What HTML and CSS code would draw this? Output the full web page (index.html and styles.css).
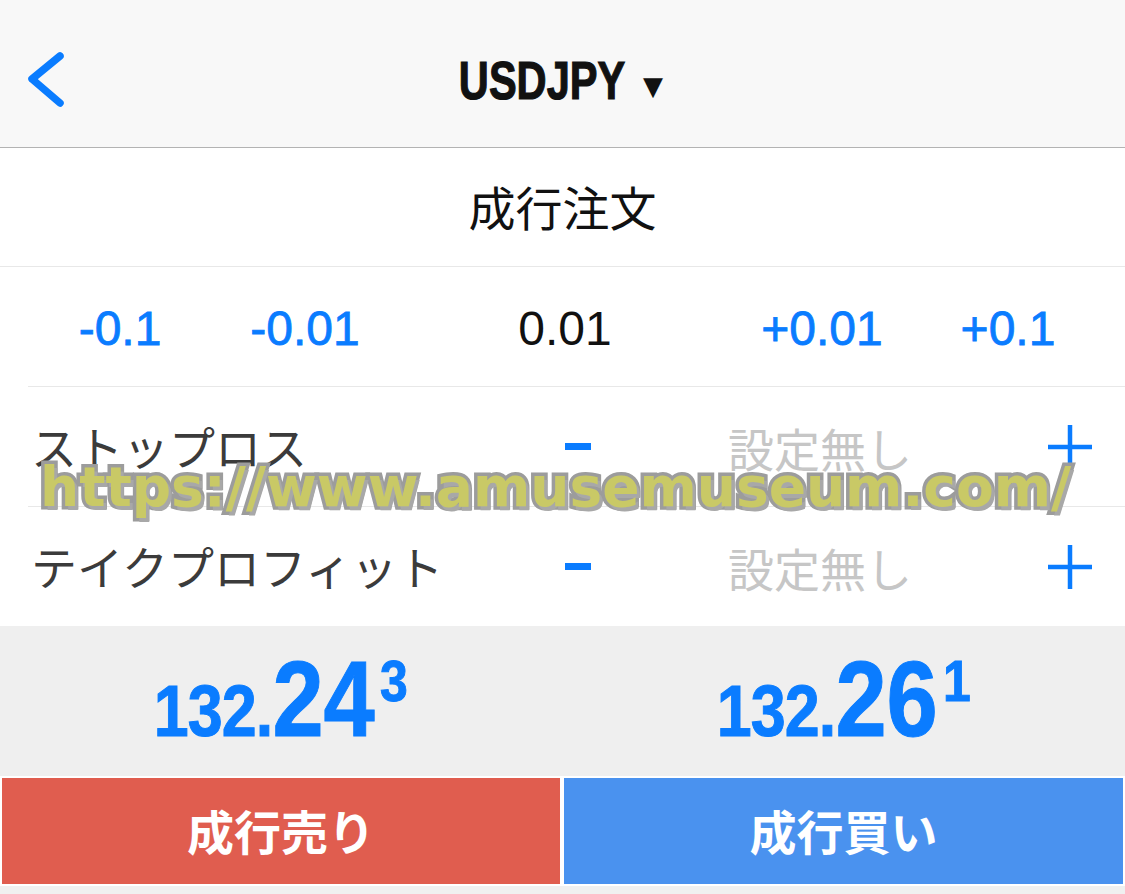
FILE: index.html
```html
<!DOCTYPE html>
<html lang="ja">
<head>
    <meta charset="UTF-8">
    <meta name="viewport" content="width=device-width, initial-scale=1.0">
    <title>USDJPY 成行注文</title>
    <link rel="stylesheet" href="styles.css">
</head>
<body>
    <header class="topbar">
        <div class="back">
            <svg width="44" height="66" viewBox="0 0 44 66">
                <polyline points="33,9 5,32 33,56" fill="none" stroke="#0a7cff" stroke-width="7.5" stroke-linecap="round" stroke-linejoin="round"/>
            </svg>
        </div>
        <div class="title"><span class="symbol">USDJPY</span><span class="caret">▼</span></div>
        <div></div>
    </header>

    <main>
        <section class="order-type">成行注文</section>

        <section class="lots">
            <span class="step">-0.1</span>
            <span class="step">-0.01</span>
            <span class="volume">0.01</span>
            <span class="step">+0.01</span>
            <span class="step">+0.1</span>
        </section>

        <section class="level">
            <span class="level-name">ストップロス</span>
            <span class="minus"><svg width="26" height="7" viewBox="0 0 26 7"><rect width="26" height="7" fill="#0a7cff"/></svg></span>
            <span class="level-value">設定無し</span>
            <span class="plus">
                <svg width="46" height="46" viewBox="0 0 46 46"><path d="M23 1V45M1 23H45" stroke="#0a7cff" stroke-width="4.5"/></svg>
            </span>
        </section>

        <section class="level last">
            <span class="level-name">テイクプロフィット</span>
            <span class="minus"><svg width="26" height="7" viewBox="0 0 26 7"><rect width="26" height="7" fill="#0a7cff"/></svg></span>
            <span class="level-value">設定無し</span>
            <span class="plus">
                <svg width="46" height="46" viewBox="0 0 46 46"><path d="M23 1V45M1 23H45" stroke="#0a7cff" stroke-width="4.5"/></svg>
            </span>
        </section>

        <section class="quotes">
            <div class="quote"><span class="q-wrap"><span class="q-small">132.</span><span class="q-big">24</span><span class="q-pip">3</span></span></div>
            <div class="quote"><span class="q-wrap"><span class="q-small">132.</span><span class="q-big">26</span><span class="q-pip">1</span></span></div>
        </section>

        <nav class="actions">
            <button class="sell">成行売り</button>
            <button class="buy">成行買い</button>
        </nav>
        <div class="bottom"></div>
    </main>

    <div class="watermark">https://www.amusemuseum.com/</div>
</body>
</html>
```

FILE: styles.css
```css
*{
    box-sizing: border-box;
}
body{
    margin: 0;
    width: 1125px;
    background: #ffffff;
    font-family: "Liberation Sans", "Noto Sans CJK JP", sans-serif;
    position: relative;
}
.topbar{
    height: 148px;
    padding-top: 12px;
    background: #f8f8f8;
    border-bottom: 1px solid #b3b3b3;
    display: grid;
    grid-template-columns: 1fr auto 1fr;
    align-items: center;
}
.back{
    padding-left: 27px;
    display: flex;
}
.title{
    display: flex;
    align-items: baseline;
    color: #111;
}
.symbol{
    display: inline-block;
    font-size: 54px;
    font-weight: bold;
    -webkit-text-stroke: 1.2px #111;
    transform: scaleX(0.77);
    margin: 0 -25px 0 -28px;
}
.caret{
    font-size: 26px;
    margin-left: 18px;
    font-family: "DejaVu Sans", sans-serif;
    transform: translateY(-4px);
}
.order-type{
    height: 119px;
    padding-bottom: 4px;
    border-bottom: 1px solid #e8e8e8;
    display: flex;
    justify-content: center;
    align-items: center;
    font-family: "Noto Sans CJK JP", sans-serif;
    font-size: 47px;
    color: #111;
}
.lots{
    height: 120px;
    margin-left: 28px;
    border-bottom: 1px solid #e8e8e8;
    display: grid;
    grid-template-columns: 184px 186px 334px 180px 192px;
    align-items: center;
    justify-items: center;
    font-size: 48px;
    padding-top: 4px;
}
.step{
    color: #0a7cff;
    -webkit-text-stroke: 0.8px #0a7cff;
}
.volume{
    color: #111;
}
.level{
    height: 120px;
    margin-left: 28px;
    border-bottom: 1px solid #e8e8e8;
    display: grid;
    grid-template-columns: 512px 76px 408px 92px;
    align-items: center;
    font-family: "Noto Sans CJK JP", sans-serif;
    font-size: 46px;
}
.level.last{
    border-bottom: none;
    height: 119px;
}
.level-name{
    padding-left: 3px;
    padding-bottom: 3px;
    color: #3b3b3b;
}
.minus{
    justify-self: center;
    display: flex;
}
.level-value{
    justify-self: center;
    color: #c6c6c6;
}
.plus{
    justify-self: center;
    display: flex;
}
.quotes{
    height: 150px;
    background: #efefef;
    display: grid;
    grid-template-columns: 562px 563px;
}
.quote{
    display: flex;
    justify-content: center;
    align-items: flex-end;
    padding-bottom: 23px;
    font-size: 107px;
    line-height: 1;
    color: #0a7cff;
    font-weight: bold;
    -webkit-text-stroke: 1px #0a7cff;
}
.q-wrap{
    display: inline-block;
    transform: scaleX(0.86);
}
.q-small{
    font-size: 73px;
    letter-spacing: -1px;
}
.q-pip{
    font-size: 58px;
    vertical-align: 35px;
    margin-left: 6px;
}
.actions{
    display: grid;
    grid-template-columns: 562px 563px;
    height: 110px;
}
.actions button{
    border: 2px solid;
    font-family: "Noto Sans CJK JP", sans-serif;
    font-weight: bold;
    font-size: 47px;
    color: #fff;
    padding: 0 0 4px;
    margin: 0;
}
.sell{
    background: #e05d4f;
    border-color: #c9463a;
}
.buy{
    background: #4a92ef;
    border-color: #3b7fdc;
}
.bottom{
    height: 8px;
    background: #f0f0f0;
}
.watermark{
    position: absolute;
    left: 40px;
    top: 455px;
    font-family: "DejaVu Sans", sans-serif;
    font-weight: bold;
    font-size: 55px;
    color: #c9c966;
    -webkit-text-stroke: 7px #9c9c9c;
    paint-order: stroke fill;
    text-shadow: 3px 4px 0 #a8a8a8;
    white-space: nowrap;
}
```
